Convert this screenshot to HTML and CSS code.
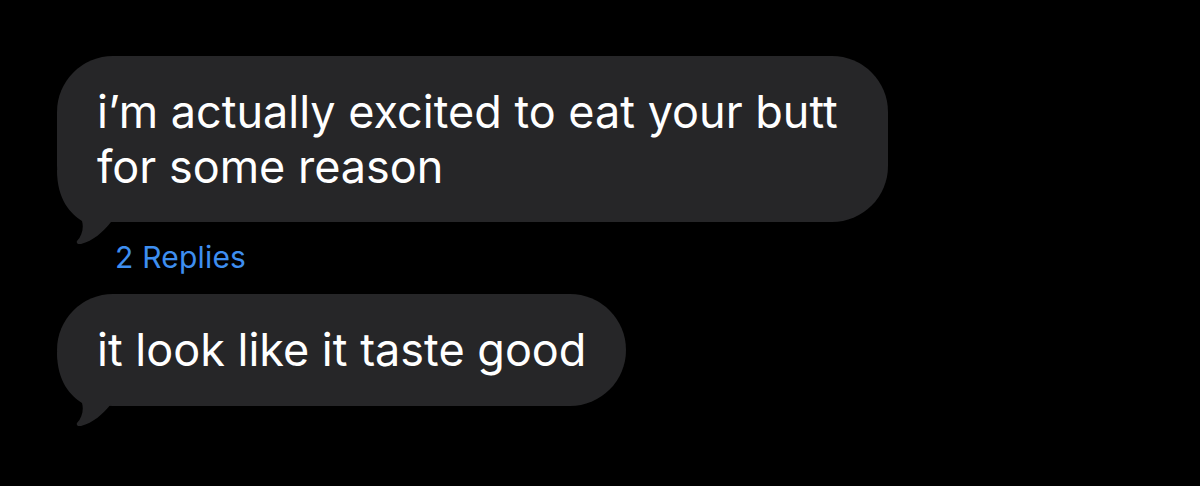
FILE: index.html
```html
<!DOCTYPE html>
<html lang="en">
<head>
<meta charset="utf-8">
<title>Messages</title>
<link rel="stylesheet" href="styles.css">
</head>
<body>
<main class="thread">
  <div class="bubble bubble-wide">
    <svg class="tail" width="75" height="74" viewBox="0 0 75 74" aria-hidden="true">
      <path d="M2,0 C2,30 16,44 27,51 C29,58 27,66 22,71 C21,73 23,75 26,74 C38,71 48,62 56,52 L75,52 L75,0 Z"/>
    </svg>
    <p class="bubble-text">i’m actually excited to eat your butt<br>for some reason</p>
  </div>
  <a class="replies" href="#">2 Replies</a>
  <div class="bubble bubble-short">
    <svg class="tail" width="75" height="74" viewBox="0 0 75 74" aria-hidden="true">
      <path d="M2,0 C2,30 16,44 27,51 C29,58 27,66 22,71 C21,73 23,75 26,74 C38,71 48,62 56,52 L75,52 L75,0 Z"/>
    </svg>
    <p class="bubble-text">it look like it taste good</p>
  </div>
</main>
</body>
</html>
```
FILE: styles.css
```css
html, body {
  margin: 0;
  height: 100%;
  background: #000;
}

body {
  font-family: Inter, "Noto Sans", sans-serif;
  color: #fff;
  overflow: hidden;
}

.thread {
  display: flex;
  flex-direction: column;
  align-items: flex-start;
  padding: 56px 0 0 57px;
}

.bubble {
  position: relative;
  background: #262628;
  border-radius: 56px;
  padding: 28px 40px;
}

.bubble-text {
  position: relative;
  margin: 0;
  font-size: 45px;
  line-height: 55px;
  white-space: nowrap;
}

.bubble-wide {
  padding-right: 50px;
}

.bubble-short {
  padding-bottom: 29px;
}

.tail {
  position: absolute;
  left: -2px;
  bottom: -22px;
  fill: #262628;
}

.bubble-short .tail {
  bottom: -20px;
}

.replies {
  margin: 20px 0 22px 58px;
  font-size: 30px;
  line-height: 30px;
  letter-spacing: 0.2px;
  color: #3e8ef0;
  text-decoration: none;
}
```
